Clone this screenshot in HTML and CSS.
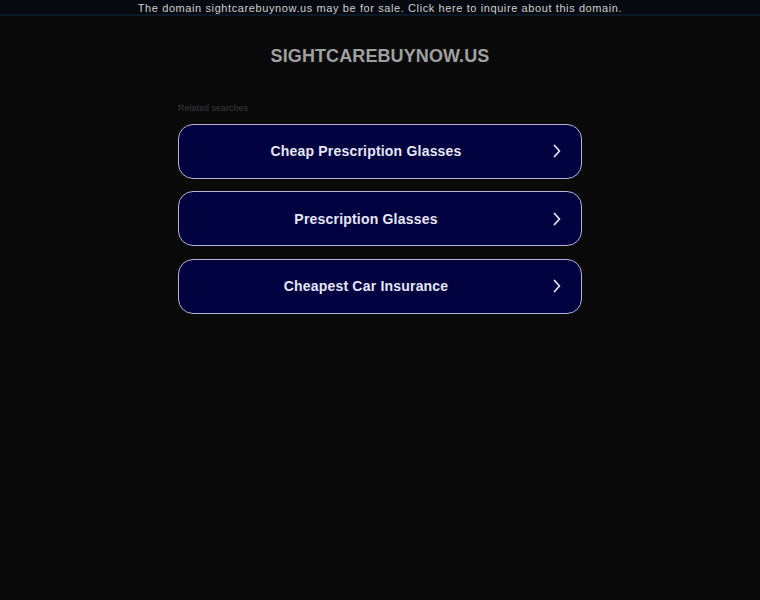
FILE: index.html
```html
<!DOCTYPE html>
<html lang="en">
<head>
<meta charset="utf-8">
<title>sightcarebuynow.us</title>
<link rel="stylesheet" href="styles.css">
</head>
<body>
<div class="topbar"><a href="#">The domain sightcarebuynow.us may be for sale. Click here to inquire about this domain.</a></div>
<h1 class="domain">SIGHTCAREBUYNOW.US</h1>
<div class="searches">
  <div class="label">Related searches</div>
  <a class="item" href="#"><span class="text">Cheap Prescription Glasses</span><svg class="chev" viewBox="0 0 8 14" width="8" height="14"><path d="M1.5 1.5 L6.5 7 L1.5 12.5" fill="none" stroke="#e0e0ff" stroke-width="1.8" stroke-linecap="round" stroke-linejoin="round"/></svg></a>
  <a class="item" href="#"><span class="text">Prescription Glasses</span><svg class="chev" viewBox="0 0 8 14" width="8" height="14"><path d="M1.5 1.5 L6.5 7 L1.5 12.5" fill="none" stroke="#e0e0ff" stroke-width="1.8" stroke-linecap="round" stroke-linejoin="round"/></svg></a>
  <a class="item" href="#"><span class="text">Cheapest Car Insurance</span><svg class="chev" viewBox="0 0 8 14" width="8" height="14"><path d="M1.5 1.5 L6.5 7 L1.5 12.5" fill="none" stroke="#e0e0ff" stroke-width="1.8" stroke-linecap="round" stroke-linejoin="round"/></svg></a>
</div>
</body>
</html>
```
FILE: styles.css
```css
html, body {
  margin: 0;
  padding: 0;
  background: #0a0a0a;
  font-family: "Liberation Sans", Arial, sans-serif;
}
.topbar {
  height: 14px;
  background: #060a10;
  border-bottom: 2px solid #0b1826;
  text-align: center;
  font-size: 11px;
  line-height: 16px;
  letter-spacing: 0.6px;
}
.topbar a {
  color: #cfcfcf;
  text-decoration: none;
}
.domain {
  margin: 29px 0 0;
  text-align: center;
  font-size: 18px;
  line-height: 22px;
  font-weight: bold;
  letter-spacing: 0.1px;
  color: #a0a0a0;
}
.searches {
  width: 404px;
  margin: 36px auto 0;
  display: flex;
  flex-direction: column;
  gap: 12.5px;
}
.label {
  font-size: 9px;
  line-height: 11px;
  color: #3a3a3a;
  margin-bottom: -3px;
}
.item {
  box-sizing: border-box;
  height: 55px;
  border: 1px solid #b4b4d8;
  border-radius: 15px;
  background: #020240;
  display: flex;
  align-items: center;
  padding: 0 20px 0 0;
  text-decoration: none;
}
.item .text {
  flex: 1;
  text-align: center;
  color: #e6e6f5;
  font-size: 14px;
  font-weight: bold;
  letter-spacing: 0.2px;
}
.chev {
  display: block;
}
```
